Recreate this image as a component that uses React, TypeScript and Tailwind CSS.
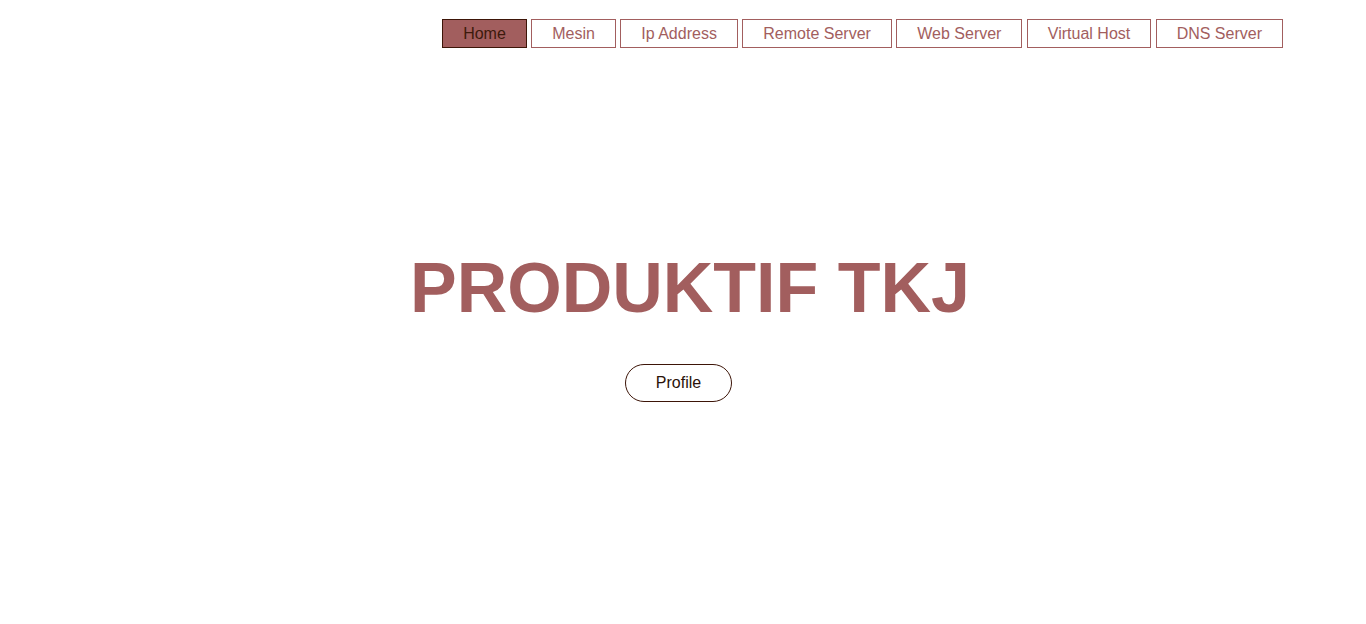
const links = ['Home', 'Mesin', 'Ip Address', 'Remote Server', 'Web Server', 'Virtual Host', 'DNS Server'];

export default function App() {
    return (
        <div className="min-h-[624px] bg-white font-['Liberation_Sans',Arial,sans-serif]">
            {/* Nav */}
            <nav className="flex justify-end gap-[4.4px] pt-[19px] pr-[83px]">
                {links.map((l, i) => (
                    <a
                        key={l}
                        href="#"
                        className={
                            i === 0
                                ? 'flex h-[29px] items-center border border-[#3d1508] bg-[#a25e5e] px-5 text-base text-[#3d1a0c]'
                                : 'flex h-[29px] items-center border border-[#a25e5e] bg-white px-5 text-base text-[#a25e5e]'
                        }
                    >
                        {l}
                    </a>
                ))}
            </nav>

            {/* Hero */}
            <div className="flex flex-col items-center pt-[204px]">
                <h1 className="pl-[14px] text-[70px] font-bold leading-[72px] text-[#a25e5e]">PRODUKTIF TKJ</h1>
                <button className="mt-[40px] mr-[9px] h-[38px] rounded-full border border-[#3d1508] px-[29.5px] text-base text-[#2a1208]">
                    Profile
                </button>
            </div>
        </div>
    );
}
